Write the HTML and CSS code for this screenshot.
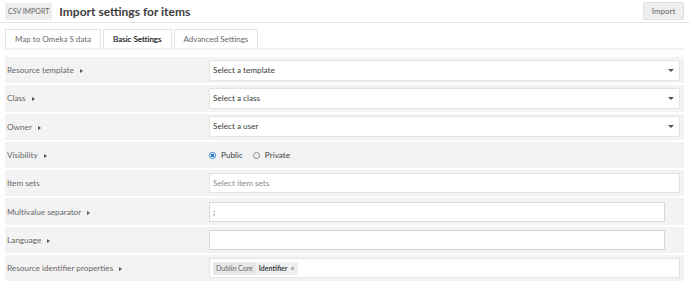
FILE: index.html
```html
<!DOCTYPE html>
<html lang="en">
<head>
    <meta charset="UTF-8">
    <meta name="viewport" content="width=device-width, initial-scale=1.0">
    <title>Import settings for items</title>
    <link rel="stylesheet" href="styles.css">
</head>
<body>

    <header class="page-header">
        <span class="module-badge">CSV IMPORT</span>
        <h1>Import settings for items</h1>
        <button type="button" class="import-btn">Import</button>
    </header>

    <div class="content">
        <nav class="tabs">
            <a class="tab">Map to Omeka S data</a>
            <a class="tab active">Basic Settings</a>
            <a class="tab">Advanced Settings</a>
        </nav>

        <div class="fields">
            <div class="field">
                <div class="field-label">Resource template <span class="arrow"></span></div>
                <div class="field-input">
                    <div class="select">Select a template</div>
                </div>
            </div>
            <div class="field">
                <div class="field-label">Class <span class="arrow"></span></div>
                <div class="field-input">
                    <div class="select">Select a class</div>
                </div>
            </div>
            <div class="field">
                <div class="field-label">Owner <span class="arrow"></span></div>
                <div class="field-input">
                    <div class="select">Select a user</div>
                </div>
            </div>
            <div class="field">
                <div class="field-label">Visibility <span class="arrow"></span></div>
                <div class="field-input radios">
                    <label class="radio"><span class="dot checked"></span>Public</label>
                    <label class="radio"><span class="dot"></span>Private</label>
                </div>
            </div>
            <div class="field">
                <div class="field-label">Item sets</div>
                <div class="field-input">
                    <div class="text-box placeholder">Select item sets</div>
                </div>
            </div>
            <div class="field">
                <div class="field-label">Multivalue separator <span class="arrow"></span></div>
                <div class="field-input">
                    <div class="text-box short">;</div>
                </div>
            </div>
            <div class="field">
                <div class="field-label">Language <span class="arrow"></span></div>
                <div class="field-input">
                    <div class="text-box short"></div>
                </div>
            </div>
            <div class="field">
                <div class="field-label">Resource identifier properties <span class="arrow"></span></div>
                <div class="field-input">
                    <div class="text-box tags">
                        <span class="tag"><span class="tag-group">Dublin Core</span><span class="tag-name">Identifier</span><span class="tag-x">&times;</span></span>
                    </div>
                </div>
            </div>
        </div>
    </div>

</body>
</html>
```

FILE: styles.css
```css
body {
    font-family: Lato, "Open Sans", sans-serif;
    margin: 0;
    padding: 0;
    background-color: #fff;
    color: #676767;
    width: 690px;
    height: 282px;
    overflow: hidden;
}
.page-header {
    display: flex;
    align-items: center;
    height: 22px;
    padding: 0 6px 0 5px;
    border-bottom: 1px solid #e6e6e6;
}
.module-badge {
    background-color: #eeeeee;
    font-size: 7px;
    color: #676767;
    padding: 5px 3px;
    line-height: 7px;
}
.page-header h1 {
    margin: 0 0 0 7px;
    font-size: 12px;
    font-weight: 700;
    color: #3c3c3c;
    flex: 1;
}
.import-btn {
    font-family: inherit;
    font-size: 8px;
    color: #676767;
    background-color: #efefef;
    border: 1px solid #dfdfdf;
    border-radius: 2px;
    height: 18px;
    width: 41px;
    padding: 0;
}
.content {
    padding: 6px 6px 0 5px;
}
.tabs {
    display: flex;
    gap: 2px;
    border-bottom: 2px solid #f1f1f1;
    margin-bottom: 7px;
}
.tab {
    font-size: 8px;
    color: #676767;
    border: 1px solid #e2e2e2;
    border-bottom: none;
    padding: 0 9px;
    height: 18px;
    line-height: 18px;
}
.tab.active {
    color: #222;
    -webkit-text-stroke: 0.2px #222;
}
.fields {
    display: flex;
    flex-direction: column;
    gap: 2px;
}
.field {
    display: flex;
    align-items: center;
    background-color: #f3f3f3;
    height: 26.3px;
}
.field-label {
    width: 202px;
    padding-left: 2px;
    font-size: 8.2px;
    color: #676767;
}
.arrow {
    display: inline-block;
    width: 0;
    height: 0;
    margin-left: 4px;
    border-top: 2.5px solid transparent;
    border-bottom: 2.5px solid transparent;
    border-left: 3.5px solid #555;
}
.field-input {
    flex: 1;
    padding-right: 4px;
}
.select {
    position: relative;
    background-color: #fff;
    border: 1px solid #e4e4e4;
    border-radius: 2px;
    height: 19px;
    line-height: 19px;
    padding-left: 3px;
    font-size: 8.2px;
    color: #3c3c3c;
}
.select::after {
    content: "";
    position: absolute;
    right: 5px;
    top: 8px;
    border-left: 3px solid transparent;
    border-right: 3px solid transparent;
    border-top: 3px solid #555;
}
.radios {
    display: flex;
    gap: 10px;
    font-size: 8.2px;
    color: #3c3c3c;
}
.radio {
    display: flex;
    align-items: center;
}
.dot {
    box-sizing: border-box;
    width: 7px;
    height: 7px;
    border: 1px solid #8a8a8a;
    border-radius: 50%;
    margin-right: 5px;
}
.dot.checked {
    border-color: #2f7fd6;
    background: radial-gradient(circle, #2f7fd6 1.5px, #fff 2px);
}
.text-box {
    background-color: #fff;
    border: 1px solid #e4e4e4;
    height: 18px;
    line-height: 18px;
    padding-left: 3px;
    font-size: 8.2px;
    color: #3c3c3c;
}
.text-box.short {
    margin-right: 15px;
    border: 1px solid #d8d8d8;
}
.placeholder {
    color: #8a8a8a;
}
.tags {
    display: flex;
    align-items: center;
}
.tag {
    display: flex;
    align-items: center;
    background-color: #e8e8e8;
    height: 13px;
    line-height: 13px;
    font-size: 7px;
}
.tag-group {
    padding: 0 3px;
    color: #676767;
}
.tag-name {
    background-color: #f0f0f0;
    padding: 0 3px;
    color: #3c3c3c;
    font-weight: 700;
}
.tag-x {
    background-color: #f0f0f0;
    padding-right: 3px;
    color: #676767;
}
```
